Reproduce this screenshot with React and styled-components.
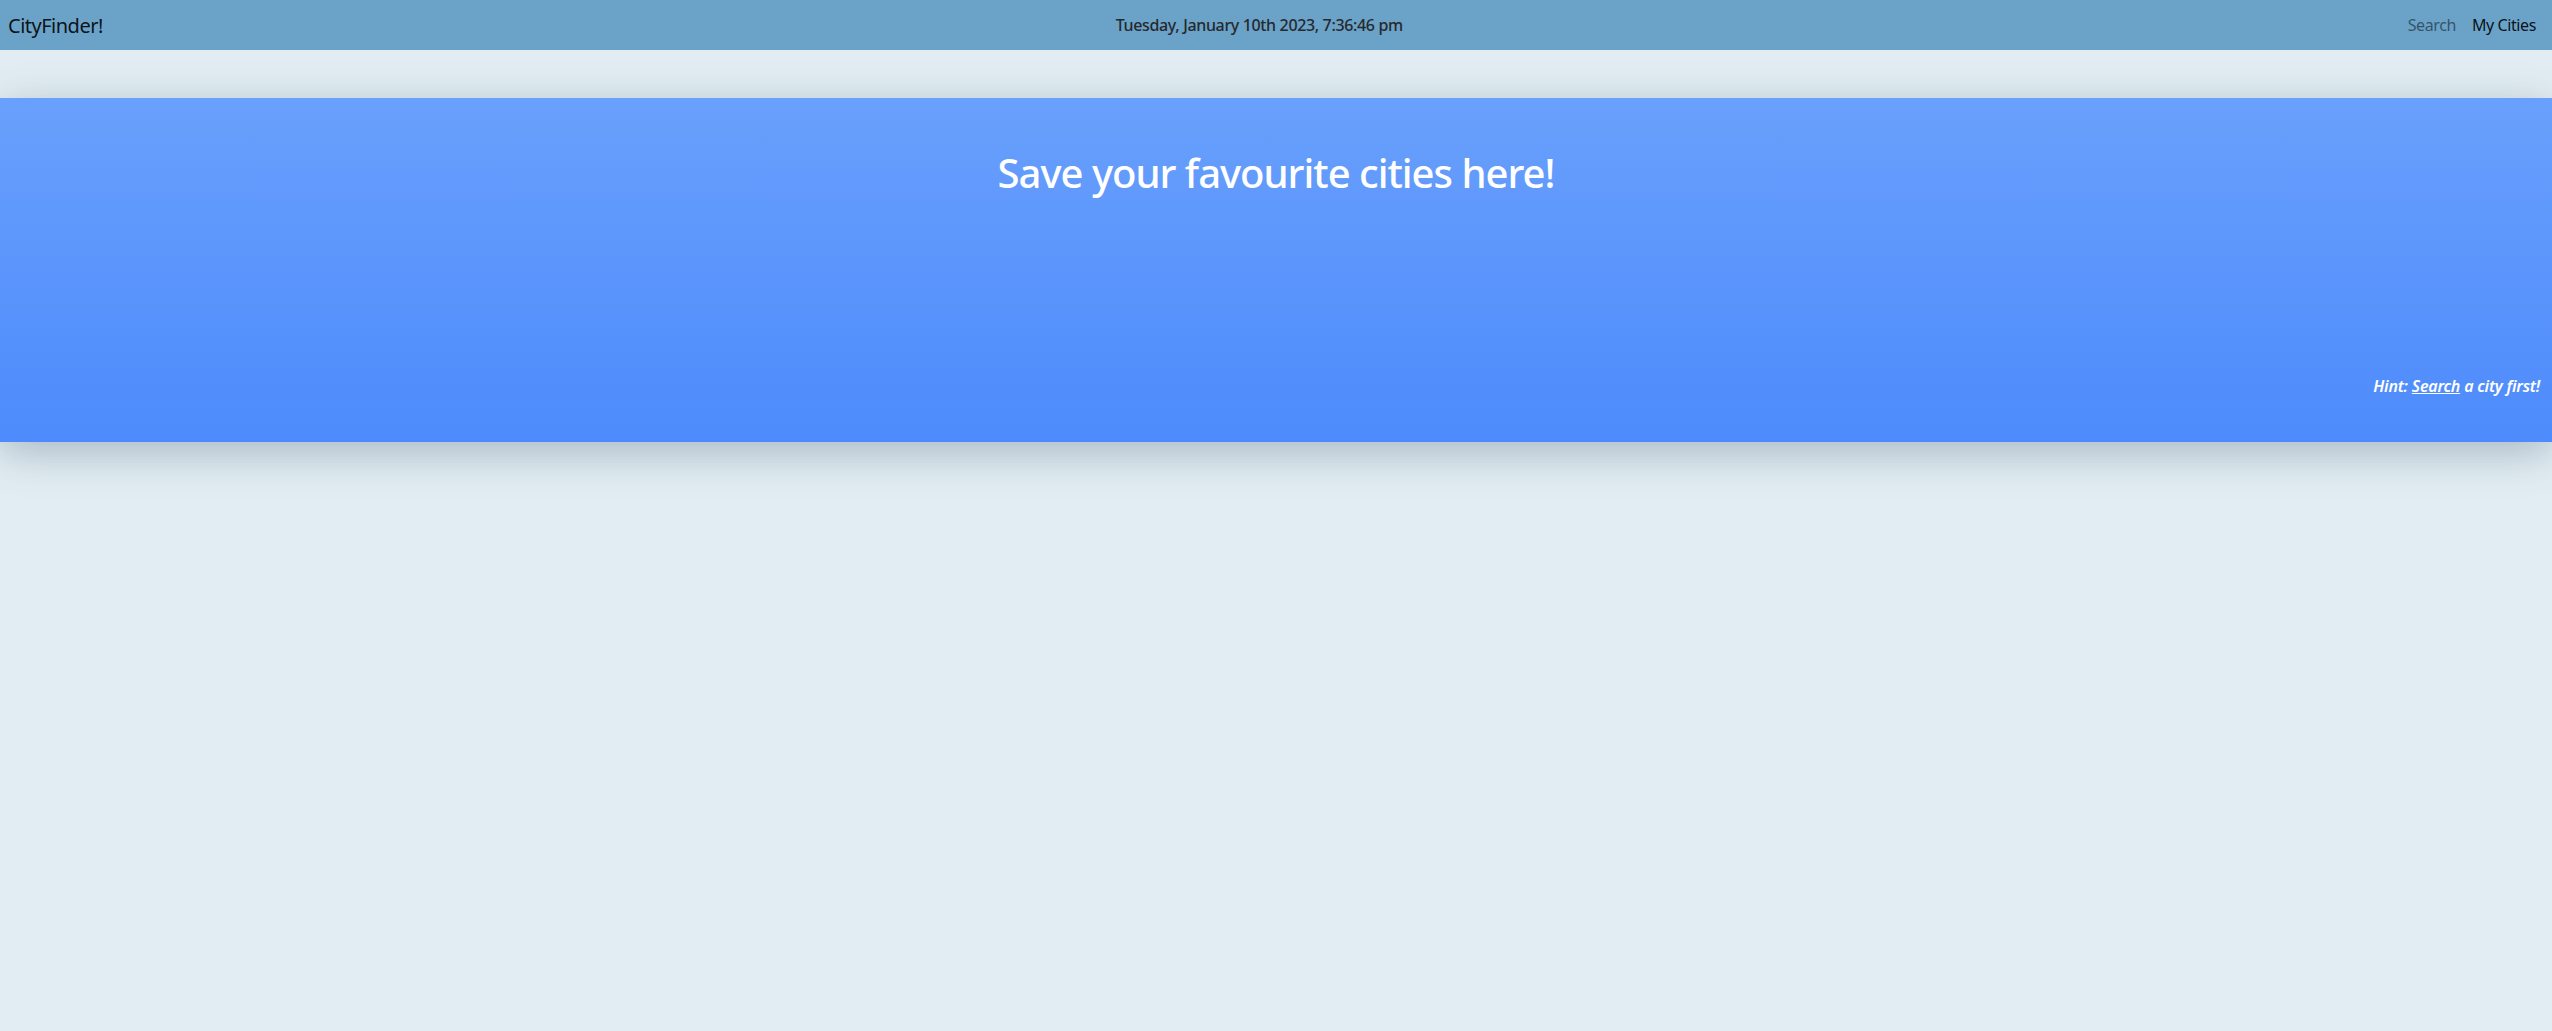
import React from 'react'
import styled, { createGlobalStyle } from 'styled-components'

const GlobalStyle = createGlobalStyle`
    html, body {
        margin: 0;
        padding: 0;
        background: #e2edf3;
        font-family: "Noto Sans", "Open Sans", sans-serif;
        color: #212529;
    }
    * { box-sizing: border-box; }
`

export default function App() {
    return (
        <Page>
            <GlobalStyle />
            <Navbar>
                <Brand href="#">CityFinder!</Brand>
                <Clock>Tuesday, January 10th 2023, 7:36:46 pm</Clock>
                <NavLinks>
                    <NavLink href="#">Search</NavLink>
                    <NavLink href="#" active>My Cities</NavLink>
                </NavLinks>
            </Navbar>
            {/* FAVOURITES BANNER */}
            <Banner>
                <Title>Save your favourite cities here!</Title>
                <Hint>Hint: <HintLink href="#">Search</HintLink> a city first!</Hint>
            </Banner>
        </Page>
    )
}

// Styled Components
const Page = styled.div`
    min-height: 1031px;
    background: #e2edf3;
`

const Navbar = styled.nav`
    height: 50px;
    background-color: #6aa2c8;
    display: flex;
    align-items: center;
    justify-content: space-between;
    padding: 0 8px;
`

const Brand = styled.a`
    font-size: 20px;
    color: rgba(0, 0, 0, 0.9);
    text-decoration: none;
    letter-spacing: -0.5px;
`

const Clock = styled.span`
    margin-left: 16px;
    font-size: 16px;
    font-weight: 500;
    color: #26292d;
    letter-spacing: -0.35px;
`

const NavLinks = styled.div`
    display: flex;
    align-items: center;
`

const NavLink = styled.a`
    font-size: 16px;
    padding: 0 8px;
    text-decoration: none;
    letter-spacing: -0.4px;
    color: ${props => props.active ? 'rgba(0, 0, 0, 0.9)' : 'rgba(0, 0, 0, 0.5)'};
`

const Banner = styled.section`
    margin-top: 48px;
    height: 344px;
    display: flex;
    flex-direction: column;
    justify-content: space-between;
    padding: 51px 12px 45px;
    background: linear-gradient(to bottom, #69a0fc, #4d8bfc);
    box-shadow: 0 10px 40px rgba(40, 60, 90, 0.3);
`

const Title = styled.h1`
    margin: 0;
    text-align: center;
    font-size: 40px;
    font-weight: 500;
    line-height: 1.2;
    color: #ffffff;
    letter-spacing: -1px;
`

const Hint = styled.p`
    margin: 0;
    text-align: right;
    font-size: 16px;
    font-weight: 600;
    font-style: italic;
    color: #ffffff;
    letter-spacing: -0.2px;
`

const HintLink = styled.a`
    color: #ffffff;
    text-decoration: underline;
`
